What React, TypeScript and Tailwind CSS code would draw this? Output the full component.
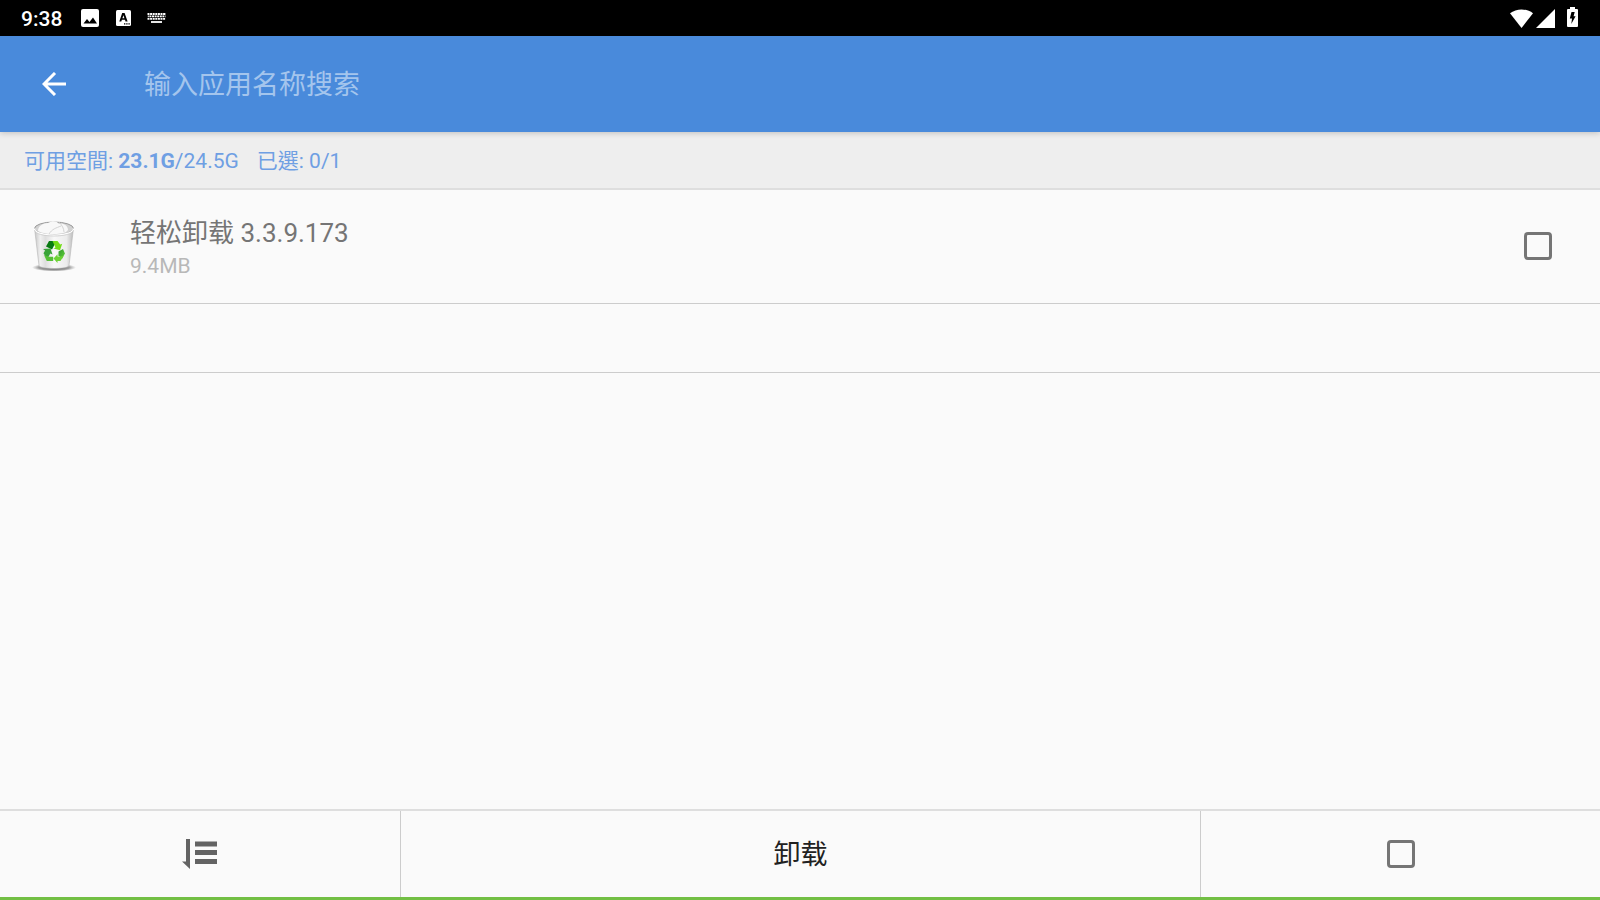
import { useState } from "react";

const box =
  "block size-7 shrink-0 appearance-none rounded-[4px] border-3 border-[#757575] bg-transparent checked:bg-[#498adb]";

function StatusBar() {
  return (
    <header className="flex h-9 shrink-0 items-center bg-black pr-5 pl-[21px] text-white">
      <span className="w-[60px] pt-0.5 text-[21px] leading-6 font-medium">9:38</span>
      <svg className="size-[18px]" viewBox="0 0 18 18" aria-hidden="true">
        <rect width="18" height="18" rx="2" fill="#fff" />
        <path d="M2.5 14.5 6 10l2.5 3 3.5-4.5 4 6z" fill="#000" />
      </svg>
      <svg className="ml-[17px] h-4 w-[15px]" viewBox="0 0 15 16" aria-hidden="true">
        <rect width="15" height="16" rx="1.5" fill="#fff" />
        <path
          d="M6.2 3h2.4l3 8.5H9.5L9 9.8H5.9l-.6 1.7H3.3zM7.4 5.2 6.4 8.3h2z"
          fill="#000"
          fillRule="evenodd"
        />
        <path d="M8 13.2h1.4v1.3H8zM10.2 13.2h1.4v1.3h-1.4zM12.4 13.2h1.4v1.3h-1.4z" fill="#000" />
      </svg>
      <svg className="ml-4 h-[10px] w-[19px]" viewBox="0 0 19 10" aria-hidden="true">
        <g stroke="#fff" strokeWidth="1.8">
          <path d="M.5 1H19" strokeDasharray="2 .6" />
          <path d="M.8 3.4H18.5" strokeDasharray="2 .6" strokeDashoffset="1" />
          <path d="M.5 5.8H18.5" strokeDasharray="2 .6" />
          <path d="M4 9H15" />
        </g>
      </svg>
      <div className="ml-auto flex items-center pr-px">
        <svg className="h-[19px] w-[23px]" viewBox="0 0 23 19" aria-hidden="true">
          <path d="M0 4.3C6.5-.9 16.5-.9 23 4.3L11.5 19z" fill="#fff" />
        </svg>
        <svg className="ml-[3px] size-[19px]" viewBox="0 0 19 19" aria-hidden="true">
          <path d="M19 0V19H0z" fill="#fff" />
        </svg>
        <svg className="mr-px mb-0.5 ml-3 h-5 w-[11px]" viewBox="0 0 11 20" aria-hidden="true">
          <path d="M3 0h5v2h2a1 1 0 0 1 1 1v16a1 1 0 0 1-1 1H1a1 1 0 0 1-1-1V3a1 1 0 0 1 1-1h2z" fill="#fff" />
          <path d="M4.500 5h3.200L6.600 9.200h2L4.300 17l.7-5.600H2.800z" fill="#000" />
        </svg>
      </div>
    </header>
  );
}

function TrashIcon() {
  return (
    <svg className="size-14 shrink-0" viewBox="0 0 56 56" aria-hidden="true">
      <defs>
        <linearGradient id="bin" x1="0" x2="1">
          <stop offset="0" stopColor="#c4c4c4" />
          <stop offset=".15" stopColor="#f0f0f0" />
          <stop offset=".28" stopColor="#dedede" />
          <stop offset=".5" stopColor="#f8f8f8" />
          <stop offset=".82" stopColor="#ececec" />
          <stop offset="1" stopColor="#b9b9b9" />
        </linearGradient>
        <linearGradient id="leaf" x1="0" x2="1" y1="0" y2="1">
          <stop offset="0" stopColor="#2f9a2c" />
          <stop offset="1" stopColor="#66cf3c" />
        </linearGradient>
        <radialGradient id="shade">
          <stop offset="0" stopColor="#333" stopOpacity=".9" />
          <stop offset=".7" stopColor="#555" stopOpacity=".55" />
          <stop offset="1" stopColor="#777" stopOpacity="0" />
        </radialGradient>
      </defs>
      <ellipse cx="28" cy="49.500" rx="22" ry="4" fill="url(#shade)" />
      <path d="M8.500 10 13 47.500c.3 4 29.700 4 30 0L47.500 10z" fill="url(#bin)" stroke="#b5b5b5" strokeWidth=".6" />
      <ellipse cx="28" cy="10.500" rx="19.500" ry="6.500" fill="#d2d2d2" stroke="#999" strokeWidth="1" />
      <path d="M12 13c0-5 5-8 10-8 5-3 9-2 11 1 5-1 9 2 9 6l-2 2c-8 3-20 3-28-1z" fill="#f8f8f8" />
      <path d="M23 16c3-5 7-6 12-8M33 4c3 3 5 7 5 10" fill="none" stroke="#c9c9c9" strokeWidth=".8" />
      <path d="M8.500 10.500c0 9 39 9 39 0" fill="none" stroke="#fff" strokeWidth="1.500" />
      <path d="M8.500 12c1 8 38 8 39 0" fill="none" stroke="#bcbcbc" strokeWidth=".6" />
      <path d="M20 28.500 23 23h7.500l-4.500 8.500z" fill="#087a12" />
      <path d="M26.500 23h5l2.700 3.500 2-.8-2.200 6.600-6.500-1.700 2-1.200z" fill="#74dc18" />
      <path d="M17 31l7.500-.5 2 6-2.200-1-3 5.500-3.800-5.800 1.600-2.700z" fill="#39a338" />
      <path d="M18 37l4.500 1.700h4.700V43h-6.400z" fill="#55bf36" />
      <path d="M32.500 33.500 37 31l1.900 4.500L36 41l-3.500-3.700z" fill="url(#leaf)" />
      <path d="M34 38.500l3.500-.5-3 5h-3v2l-4-4.500 4-4.300v2.300z" fill="#6bd334" />
    </svg>
  );
}

export default function App() {
  const [query, setQuery] = useState("");
  const [selected, setSelected] = useState(false);
  const toggle = () => setSelected(!selected);

  return (
    <div className="flex min-h-screen flex-col bg-[#fafafa] font-['Roboto','Noto_Sans_CJK_SC',sans-serif]">
      <StatusBar />
      <div className="relative flex h-24 shrink-0 items-center bg-[#498adb] pl-[42px] shadow-[0_1px_6px_rgba(0,0,0,0.2)]">
        <button type="button" aria-label="返回" className="text-white">
          <svg className="size-6" viewBox="0 0 24 24" fill="none" stroke="currentColor" strokeWidth="3" aria-hidden="true">
            <path d="M24 12H2.500M13 1 2 12l11 11" />
          </svg>
        </button>
        <input
          type="text"
          aria-label="搜索应用"
          placeholder="输入应用名称搜索"
          value={query}
          onChange={(e) => setQuery(e.target.value)}
          className="ml-[78px] h-12 min-w-0 flex-1 bg-transparent pt-0.5 text-[27px] leading-8 text-white outline-none placeholder:text-[#a4c5ed]"
        />
      </div>
      <p className="flex h-[58px] shrink-0 items-center border-b-2 border-[#dedede] bg-[#eeeeee] pt-0.5 pl-6 text-[21px] leading-6 text-[#6f9fe3]">
        <span lang="zh-Hant">
          可用空間: <b>23.1G</b>/24.5G
        </span>
        <span lang="zh-Hant" className="ml-[18px]">已選: {selected ? 1 : 0}/1</span>
      </p>
      <main className="flex-1">
        <ul>
          <li className="border-b border-[#cccccc]">
            <label className="flex h-[113px] items-center pr-12 pb-px pl-[26px]">
              <TrashIcon />
              <span className="ml-12 flex flex-1 flex-col pt-0.5">
                <span className="text-[26px] leading-[38px] text-[#757575]">轻松卸载 3.3.9.173</span>
                <span className="text-[21px] leading-7 text-[#b8b8b8]">9.4MB</span>
              </span>
              <input type="checkbox" className={box} checked={selected} onChange={toggle} />
            </label>
          </li>
          <li className="h-[69px] border-b border-[#cccccc]" />
        </ul>
      </main>
      <footer className="grid h-[91px] shrink-0 grid-cols-[1fr_2fr_1fr] border-t-2 border-b-3 border-t-[#dedede] border-b-[#72bf44]">
        <button type="button" aria-label="排序" className="flex items-center justify-center">
          <svg className="h-[30px] w-9" viewBox="0 0 36 30" fill="#636363" aria-hidden="true">
            <path d="M4 0h4v30L0 22.500h4zM13 2.500h22v5H13zM13 11h22v5H13zM13 20h22v5H13z" />
          </svg>
        </button>
        <button type="button" className="border-l border-[#cccccc] pt-0.5 text-[27px] leading-8 text-[#212121]">
          卸载
        </button>
        <label className="flex items-center justify-center border-l border-[#cccccc]">
          <input type="checkbox" aria-label="全选" className={box} checked={selected} onChange={toggle} />
        </label>
      </footer>
    </div>
  );
}
